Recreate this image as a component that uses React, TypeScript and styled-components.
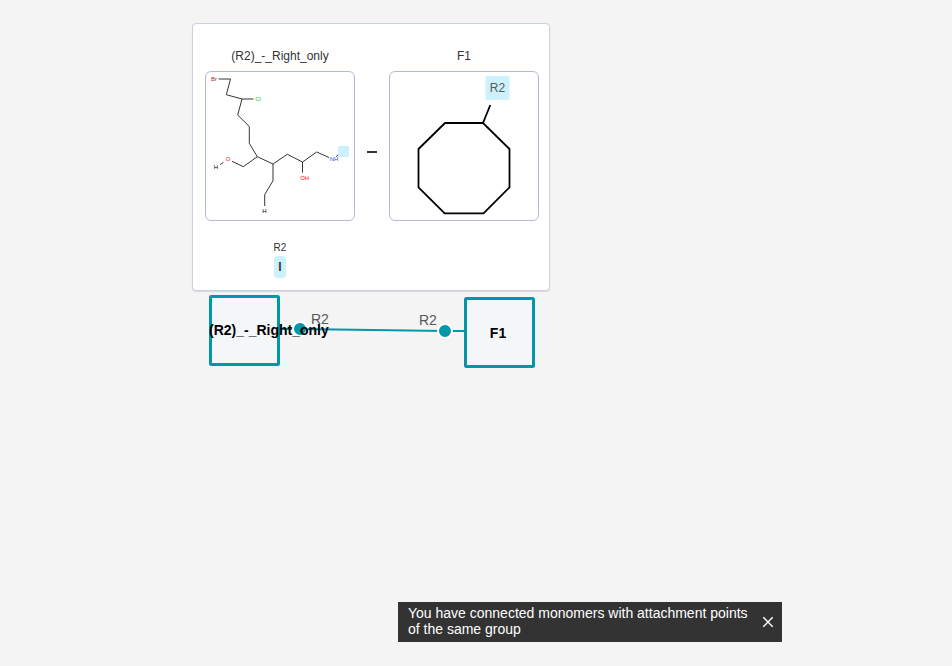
import React from 'react';
import styled, { createGlobalStyle } from 'styled-components';

const GlobalStyle = createGlobalStyle`
  * { box-sizing: border-box; }
  body {
    margin: 0;
    background: #f4f4f4;
    font-family: "Liberation Sans", Arial, sans-serif;
    color: #333333;
  }
`;

const Workspace = styled.main`
  position: relative;
  min-height: 100vh;
  overflow: hidden;
`;

const Canvas = styled.svg`
  display: block;
  width: 100%;
  height: 100vh;
`;

const MonomerBox = styled.rect`
  fill: #f4f6f9;
  stroke: #0097a8;
  stroke-width: 3px;
`;

const MonomerLabel = styled.text`
  font-size: 14px;
  font-weight: 700;
  fill: #000000;
`;

const PointLabel = styled.text`
  font-size: 14px;
  fill: #585858;
`;

const Bond = styled.line`
  stroke: #0097a8;
  stroke-width: 2px;
`;

const Point = styled.circle`
  fill: #0097a8;
  stroke: #ffffff;
  stroke-width: 2px;
`;

const PreviewCard = styled.section`
  position: absolute;
  top: 23px;
  left: 192px;
  display: flex;
  gap: 12px;
  padding: 24px 10px 12px 12px;
  background: #ffffff;
  border: 1px solid #cad3dd;
  border-radius: 4px;
  box-shadow: 0 1px 1px rgba(103, 104, 132, 0.2);
`;

const PreviewColumn = styled.figure`
  display: flex;
  flex-direction: column;
  align-items: center;
  width: 150px;
  margin: 0;
`;

const PreviewTitle = styled.figcaption`
  height: 23px;
  font-size: 12px;
  line-height: 16px;
  white-space: nowrap;
`;

const StructureFrame = styled.div`
  width: 150px;
  height: 150px;
  border: 1px solid #b4b9d9;
  border-radius: 6px;
`;

const Structure = styled.svg`
  display: block;
  width: 100%;
  height: 100%;
`;

const BondDash = styled.span`
  align-self: flex-start;
  width: 10px;
  height: 2px;
  margin-top: 103px;
  background: #333333;
`;

const PointInfo = styled.dl`
  display: flex;
  flex-direction: column;
  align-items: center;
  margin: 21px 0 0;
`;

const PointName = styled.dt`
  font-size: 10px;
  line-height: 12px;
`;

const LeavingGroup = styled.dd`
  margin: 2px 0 0;
  padding: 0 4px;
  border-radius: 4px;
  background: #cdf1fc;
  font-size: 12px;
  font-weight: 700;
  line-height: 22px;
`;

const Toast = styled.div`
  position: absolute;
  right: 170px;
  bottom: 24px;
  display: flex;
  align-items: center;
  width: 384px;
  padding: 3px 6px 5px 10px;
  background: #333333;
  color: #ffffff;
`;

const ToastText = styled.p`
  flex: 1;
  margin: 0;
  padding-right: 12px;
  font-size: 14px;
  line-height: 16px;
`;

const CloseButton = styled.button`
  display: flex;
  padding: 4px 2px 2px;
  border: 0;
  background: transparent;
  color: inherit;
  cursor: pointer;
`;

const atoms = [
  { text: 'Br', x: 8, y: 9, color: '#a62929' },
  { text: 'Cl', x: 52, y: 29, color: '#1fd01f' },
  { text: 'O', x: 22, y: 89, color: '#ff0d0d' },
  { text: 'H', x: 10, y: 97, color: '#000000' },
  { text: 'H', x: 58.5, y: 141, color: '#000000' },
  { text: 'OH', x: 98.7, y: 108, color: '#ff0d0d' },
  { text: 'NH', x: 128, y: 89, color: '#304ff7' },
];

function ChainStructure() {
  return (
    <Structure viewBox="0 0 148 148" role="img" aria-label="Chain structure">
      <path
        d="M12.7 7H24.5L20.3 22.7L36 27H47.5M36 27L31.7 43L43.3 54.5V71.3L51.3 84.7L67 92V108.7L58.7 122.7V134M51.3 84.7L37.3 94.7L26 89.3M17.5 90.3L14 92.7M67 92L81.3 82.3L96.5 90V100.7M96.5 90L110.7 80L123 85.5M130 84.7L134 81"
        fill="none"
        stroke="#000000"
        strokeWidth="0.8"
        strokeLinejoin="round"
      />
      <rect x="132" y="74" width="11" height="11" rx="1" fill="#cdf1fc" />
      {atoms.map((atom) => (
        <text key={`${atom.text}-${atom.x}`} x={atom.x} y={atom.y} fontSize="6" textAnchor="middle" fill={atom.color}>
          {atom.text}
        </text>
      ))}
    </Structure>
  );
}

function RingStructure() {
  return (
    <Structure viewBox="0 0 148 148" role="img" aria-label="Ring structure">
      <path
        d="M55 51H93L119.5 77V115.3L93.5 141.3H54.7L28.5 115.3V77ZM93 51L100.3 33"
        fill="none"
        stroke="#000000"
        strokeWidth="1.8"
        strokeLinejoin="round"
      />
      <rect x="95.5" y="4" width="24" height="24" rx="2" fill="#cdf1fc" />
      <text x="107.5" y="20" fontSize="12" textAnchor="middle" fill="#585858">
        R2
      </text>
    </Structure>
  );
}

export default function App() {
  return (
    <>
      <GlobalStyle />
      <Workspace>
        <Canvas aria-label="Monomer canvas">
          <Bond x1="279" y1="329" x2="300" y2="329" />
          <Bond x1="300" y1="329" x2="445" y2="331" />
          <Bond x1="445" y1="331" x2="466" y2="331" />
          <Point cx="300" cy="329" r="7" />
          <Point cx="445" cy="331" r="7" />
          <MonomerBox x="210.5" y="296.5" width="68" height="68" rx="1" />
          <MonomerBox x="465.5" y="298.5" width="68" height="68" rx="1" />
          <PointLabel x="311" y="324">R2</PointLabel>
          <PointLabel x="419" y="325">R2</PointLabel>
          <MonomerLabel x="209" y="335">(R2)_-_Right_only</MonomerLabel>
          <MonomerLabel x="498" y="338" textAnchor="middle">F1</MonomerLabel>
        </Canvas>

        <PreviewCard>
          <PreviewColumn>
            <PreviewTitle>(R2)_-_Right_only</PreviewTitle>
            <StructureFrame>
              <ChainStructure />
            </StructureFrame>
            <PointInfo>
              <PointName>R2</PointName>
              <LeavingGroup>I</LeavingGroup>
            </PointInfo>
          </PreviewColumn>
          <BondDash />
          <PreviewColumn>
            <PreviewTitle>F1</PreviewTitle>
            <StructureFrame>
              <RingStructure />
            </StructureFrame>
          </PreviewColumn>
        </PreviewCard>

        <Toast role="status">
          <ToastText>You have connected monomers with attachment points of the same group</ToastText>
          <CloseButton type="button" aria-label="Close">
            <svg width="12" height="12" viewBox="0 0 12 12" aria-hidden="true">
              <path d="M1.3 1.3L10.7 10.7M10.7 1.3L1.3 10.7" fill="none" stroke="currentColor" strokeWidth="1.4" />
            </svg>
          </CloseButton>
        </Toast>
      </Workspace>
    </>
  );
}
